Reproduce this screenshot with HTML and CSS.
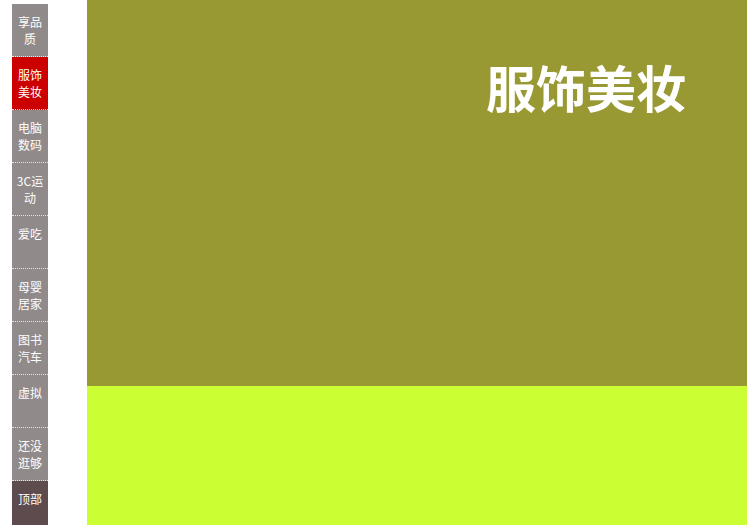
FILE: index.html
```html
<!DOCTYPE html>
<html lang="zh">
<head>
<meta charset="utf-8">
<title>服饰美妆</title>
<link rel="stylesheet" href="styles.css">
</head>
<body>
<div class="page">
  <nav class="sidebar">
    <a class="item">享品<br>质</a>
    <a class="item active">服饰<br>美妆</a>
    <a class="item">电脑<br>数码</a>
    <a class="item">3C运<br>动</a>
    <a class="item">爱吃</a>
    <a class="item">母婴<br>居家</a>
    <a class="item">图书<br>汽车</a>
    <a class="item">虚拟</a>
    <a class="item">还没<br>逛够</a>
    <a class="item top">顶部</a>
  </nav>
  <main class="main">
    <section class="floor floor-a">
      <h1 class="title">服饰美妆</h1>
    </section>
    <section class="floor floor-b"></section>
  </main>
</div>
</body>
</html>
```
FILE: styles.css
```css
html, body {
  margin: 0;
  padding: 0;
  height: 100%;
  overflow: hidden;
  background: #ffffff;
  font-family: "Noto Sans CJK SC", "Noto Sans", sans-serif;
}
.page {
  display: flex;
  align-items: flex-start;
  height: 525px;
}
.sidebar {
  display: flex;
  flex-direction: column;
  width: 36px;
  margin: 4px 0 0 12px;
}
.item {
  display: block;
  box-sizing: border-box;
  height: 53px;
  padding-top: 9px;
  background: #918a8a;
  color: #ffffff;
  font-size: 12px;
  line-height: 17px;
  text-align: center;
  border-bottom: 1px dotted #e8e4e4;
  flex: none;
}
.item.active {
  background: #cc0000;
}
.item.top {
  background: #5e4b4d;
  border-bottom: none;
}
.main {
  margin-left: 39px;
  flex: 1;
  display: flex;
  flex-direction: column;
  height: 525px;
}
.floor-a {
  height: 386px;
  background: #999933;
  display: flex;
  justify-content: flex-end;
  flex: none;
}
.floor-b {
  flex: 1;
  background: #ccff33;
}
.title {
  margin: 52px 61px 0 0;
  color: #ffffff;
  font-size: 50px;
  font-weight: bold;
  line-height: 68px;
  letter-spacing: 0;
}
```
